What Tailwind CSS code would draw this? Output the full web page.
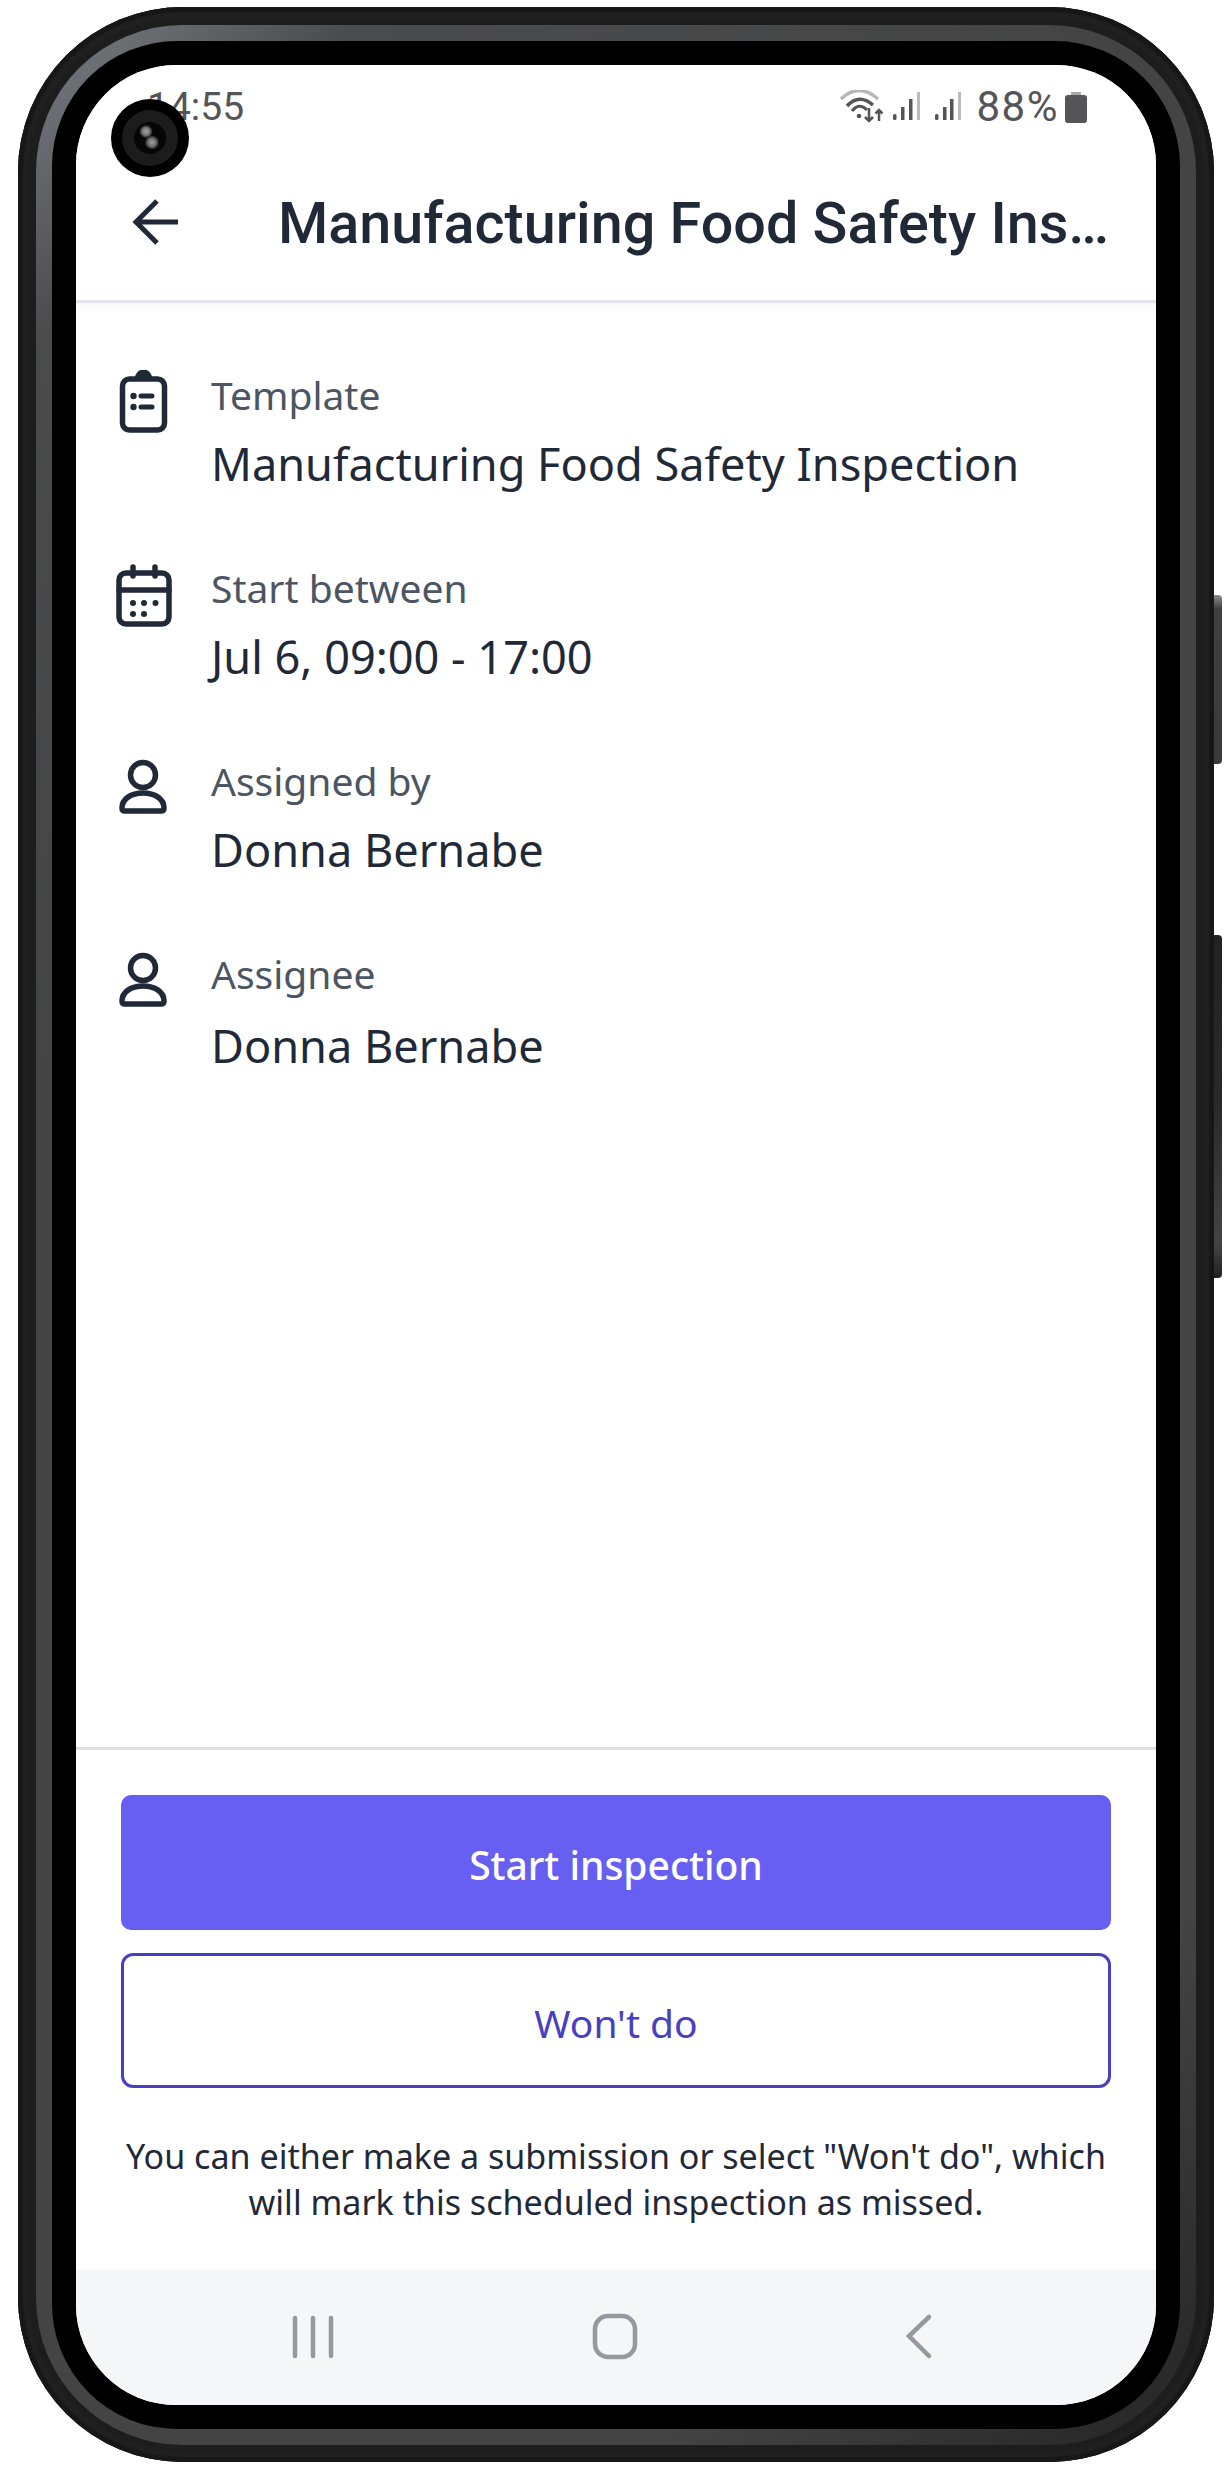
<!DOCTYPE html>
<html><head><meta charset="utf-8"><script src="https://cdn.jsdelivr.net/npm/@tailwindcss/browser@4"></script></head>
<body class="bg-white">
<div class="relative w-[1231px] h-[2469px] bg-white pt-[7px] pl-[18px] font-['Noto_Sans',sans-serif] overflow-hidden">
  <div class="absolute left-[1208px] top-[595px] w-[14px] h-[169px] rounded-r-[4px] bg-[linear-gradient(180deg,#8b8d90_0px,#3f3f3f_14px,#3a3a3a_100%)]"></div>
  <div class="absolute left-[1208px] top-[935px] w-[14px] h-[343px] rounded-r-[4px] bg-[linear-gradient(180deg,#222_0%,#2a2a2a_50%,#444_90%,#222_100%)]"></div>
  <div class="relative w-[1196px] h-[2455px] rounded-[165px] bg-[#1d1d1d] pt-[18px] pb-[17px] px-[18px] shadow-[inset_0_0_0_5px_#171717,inset_0_0_0_11px_#202020]">
    <div class="w-full h-full rounded-[147px] p-[16px] bg-[linear-gradient(135deg,#75787c_0%,#6a6d71_3%,#4a4b4d_9%,#444444_30%,#444444_85%,#2a2a2a_97%)]">
      <div class="w-full h-full rounded-[125px] bg-black p-[24px]">
        <div class="relative w-full h-full rounded-[100px] bg-white overflow-hidden flex flex-col">
          <!-- status + header -->
          <div class="relative h-[238px] shrink-0 border-b-[3px] border-[#e2e4e9] shadow-[0_4px_8px_rgba(0,0,0,0.03)] z-10 bg-white">
            <div class="flex items-center justify-between h-[54px] mt-[15px] pl-[71px] pr-[69px] font-['Roboto',sans-serif] text-[39px] leading-[54px] text-[#555558]">
              <span>14:55</span>
              <div class="flex items-center gap-[6px]">
                <svg width="124" height="34" viewBox="0 0 124 34" class="mr-[7px]" fill="none">
                  <path d="M1 9 Q19 -8 38 9" stroke="#b4b6b9" stroke-width="3.500"/>
                  <path d="M7 16 Q19 3 33 15" stroke="#555" stroke-width="3.500"/>
                  <path d="M12 21 Q19 12 27 20" stroke="#555" stroke-width="3"/>
                  <circle cx="19" cy="26" r="2.300" fill="#555"/>
                  <path d="M29 18V31M25 27l4 4 4-4M39 31V20M35.500 23.500l3.500-3.500 3.500 3.500" stroke="#555" stroke-width="2.500"/>
                  <rect x="53" y="24" width="3.500" height="6" rx="1.500" fill="#555"/><rect x="61" y="17" width="3.500" height="13" fill="#555"/><rect x="69" y="9" width="3.500" height="21" fill="#555"/><rect x="77" y="2" width="3" height="28" fill="#b9bbbd"/>
                  <rect x="95" y="24" width="3.500" height="6" rx="1.500" fill="#555"/><rect x="103" y="17" width="3.500" height="13" fill="#555"/><rect x="110" y="9" width="3.500" height="21" fill="#555"/><rect x="118" y="2" width="3" height="28" fill="#b9bbbd"/>
                </svg>
                <span class="text-[42px] tracking-[1.500px]">88%</span>
                <svg width="22" height="32" viewBox="0 0 22 32"><path d="M6 1h10v4H6z" fill="#aaa"/><rect x="0" y="4" width="22" height="28" rx="3" fill="#555558"/></svg>
              </div>
            </div>
            <div class="flex items-center mt-[54px] h-[72px] pl-[55px]">
              <svg width="50" height="50" viewBox="0 0 50 50" fill="none" class="shrink-0 -mt-[4px]"><path d="M47 25H5M26 4L5 25l21 21" stroke="#1f2937" stroke-width="5"/></svg>
              <div class="ml-[97px] text-[57.500px] leading-[72px] font-medium font-['Roboto',sans-serif] text-[#1f2937] whitespace-nowrap">Manufacturing Food Safety Ins…</div>
            </div>
          </div>
          <!-- rows -->
          <div class="flex-1 pt-[59px] pl-[40px]">
            <div class="flex h-[193px]">
              <div class="w-[95px] shrink-0"><svg width="55" height="66" viewBox="0 0 55 66" fill="none" class="mt-[8px]"><rect x="6.500" y="9" width="42" height="51" rx="7" stroke="#1f2937" stroke-width="5.500"/><path d="M20 8a7.500 7.500 0 0 1 15 0z" fill="#1f2937" stroke="#1f2937" stroke-width="2"/><circle cx="17.500" cy="26" r="3.200" fill="#1f2937"/><circle cx="17.500" cy="37" r="3.200" fill="#1f2937"/><path d="M25 26h11M25 37h11" stroke="#1f2937" stroke-width="5" stroke-linecap="round"/></svg></div>
              <div><div class="text-[39px] leading-[50px] text-[#4b5563] pt-[8px]">Template</div><div class="text-[45.100px] leading-[62px] text-[#1f2937] mt-[13px] whitespace-nowrap">Manufacturing Food Safety Inspection</div></div>
            </div>
            <div class="flex h-[193px]">
              <div class="w-[95px] shrink-0"><svg width="58" height="66" viewBox="0 0 58 66" fill="none" class="mt-[7px]"><rect x="3" y="11" width="50" height="51" rx="7" stroke="#1f2937" stroke-width="5.500"/><path d="M3 28h50M17 5v9M39 5v9" stroke="#1f2937" stroke-width="5.500" stroke-linecap="round"/><g fill="#1f2937"><circle cx="17" cy="41" r="3"/><circle cx="28" cy="41" r="3"/><circle cx="39.500" cy="41" r="3"/><circle cx="17" cy="52" r="3"/><circle cx="28" cy="52" r="3"/></g></svg></div>
              <div><div class="text-[39px] leading-[50px] text-[#4b5563] pt-[8px]">Start between</div><div class="text-[45.100px] leading-[62px] text-[#1f2937] mt-[13px]">Jul 6, 09:00 - 17:00</div></div>
            </div>
            <div class="flex h-[193px]">
              <div class="w-[95px] shrink-0"><svg width="55" height="60" viewBox="0 0 55 60" fill="none" class="mt-[7px]"><circle cx="27" cy="20" r="12.500" stroke="#1f2937" stroke-width="5.500"/><path d="M6 53c0-9 9-15 21-15s21 6 21 15c0 2-1 3-3 3H9c-2 0-3-1-3-3z" stroke="#1f2937" stroke-width="5.500"/></svg></div>
              <div><div class="text-[39px] leading-[50px] text-[#4b5563] pt-[8px]">Assigned by</div><div class="text-[45.100px] leading-[62px] text-[#1f2937] mt-[13px]">Donna Bernabe</div></div>
            </div>
            <div class="flex">
              <div class="w-[95px] shrink-0"><svg width="55" height="60" viewBox="0 0 55 60" fill="none" class="mt-[7px]"><circle cx="27" cy="20" r="12.500" stroke="#1f2937" stroke-width="5.500"/><path d="M6 53c0-9 9-15 21-15s21 6 21 15c0 2-1 3-3 3H9c-2 0-3-1-3-3z" stroke="#1f2937" stroke-width="5.500"/></svg></div>
              <div><div class="text-[39px] leading-[50px] text-[#4b5563] pt-[8px]">Assignee</div><div class="text-[45.100px] leading-[62px] text-[#1f2937] mt-[16px]">Donna Bernabe</div></div>
            </div>
          </div>
          <!-- footer -->
          <div class="h-[523px] shrink-0 border-t-[3px] border-[#dfe1e5] px-[45px] pt-[45px]">
            <div class="h-[135px] rounded-[10px] bg-[#675ff1] flex items-center justify-center text-white text-[39px] font-medium pt-[6px]">Start inspection</div>
            <div class="h-[135px] mt-[23px] rounded-[12px] border-[3px] border-[#4740c0] flex items-center justify-center text-[#4740c0] text-[39px] pt-[6px]">Won't do</div>
            <p class="mt-[45px] text-[34.050px] leading-[46px] text-center text-[#1f2937] -mx-[10px]">You can either make a submission or select "Won't do", which<br>will mark this scheduled inspection as missed.</p>
          </div>
          <!-- nav -->
          <div class="h-[135px] shrink-0 bg-[#f5f6f8]">
            <svg width="1080" height="135" viewBox="0 0 1080 135" fill="none" class="block">
              <path d="M219 48v38M237 48v38M255 48v38" stroke="#95989e" stroke-width="4.500" stroke-linecap="round"/>
              <rect x="519" y="46" width="40" height="41" rx="13" stroke="#95989e" stroke-width="4.500"/>
              <path d="M853 47L833 66l20 20" stroke="#95989e" stroke-width="4.500" stroke-linecap="round"/>
            </svg>
          </div>
        </div>
      </div>
    </div>
  </div>
  <!-- camera -->
  <div class="absolute z-20 left-[111px] top-[99px] w-[78px] h-[78px] rounded-full bg-black flex items-center justify-center">
    <div class="w-[56px] h-[56px] rounded-full bg-[#1c1c1c] flex items-center justify-center">
      <div class="relative w-[32px] h-[32px] rounded-full bg-[#060606]">
        <div class="absolute left-[5px] top-[3px] w-[14px] h-[13px] rounded-full bg-[radial-gradient(circle,#a5a5a5_0%,#777_40%,transparent_72%)]"></div>
        <div class="absolute left-[10px] top-[14px] w-[16px] h-[13px] rounded-full bg-[radial-gradient(circle,#a0a0a0_0%,#6d6d6d_40%,transparent_72%)]"></div>
      </div>
    </div>
  </div>
</div>
</body></html>
